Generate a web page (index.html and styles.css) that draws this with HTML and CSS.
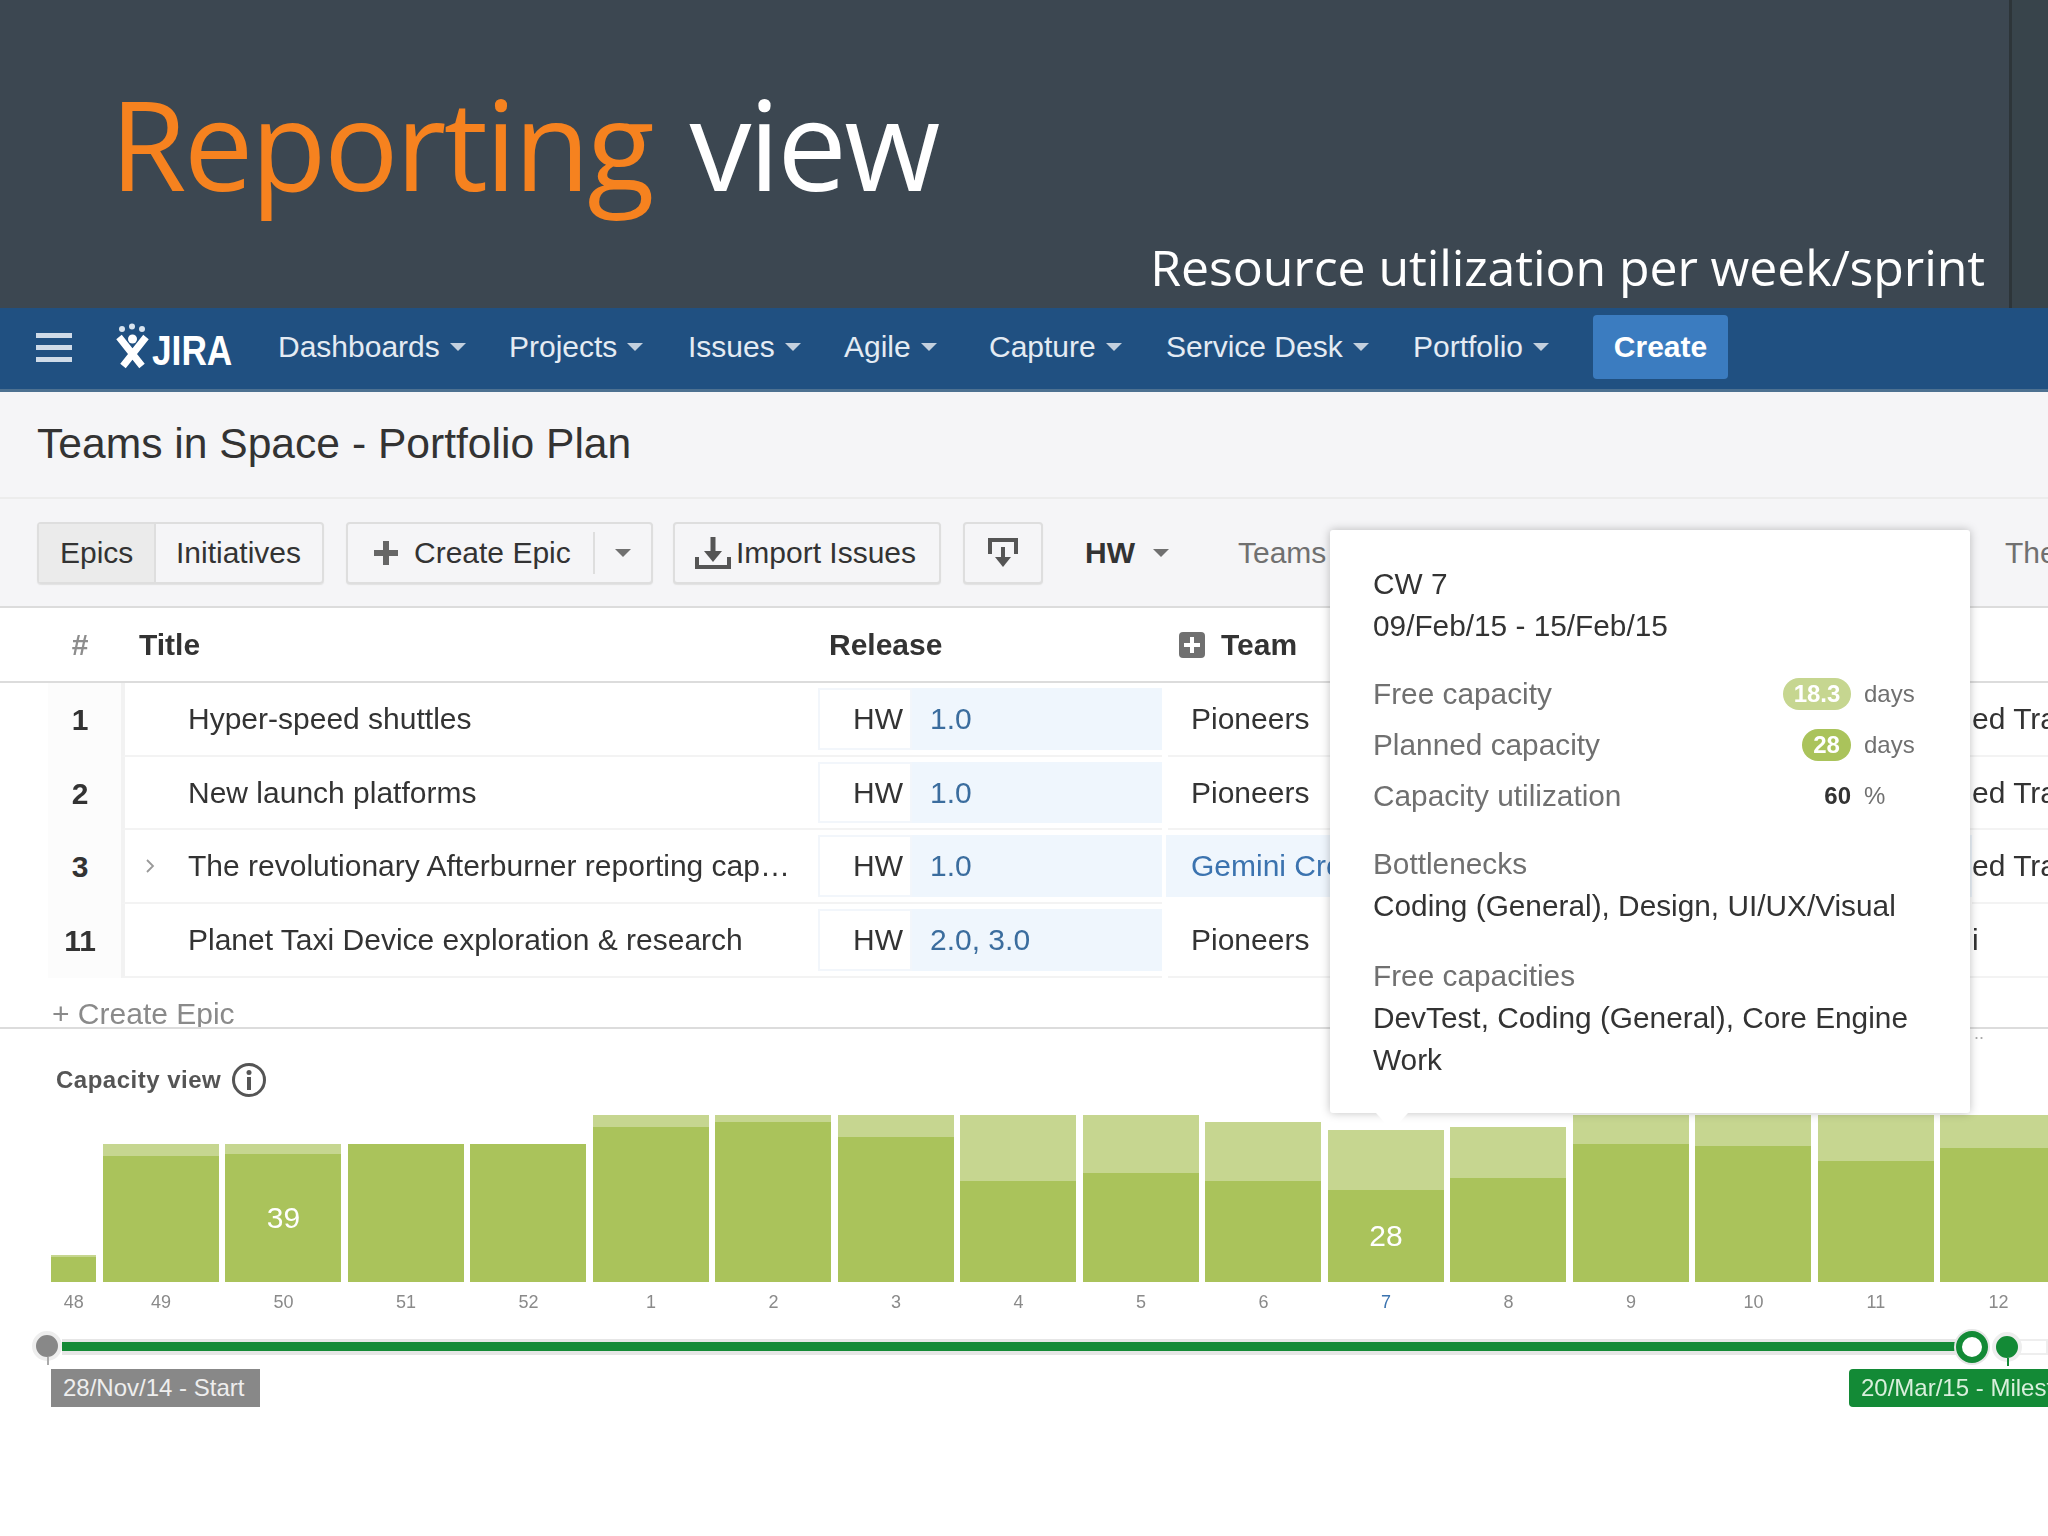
FILE: index.html
```html
<!DOCTYPE html>
<html lang="en">
<head>
<meta charset="utf-8">
<title>Reporting view</title>
<link rel="stylesheet" href="styles.css">
</head>
<body>
<div class="slide">
  <header class="hero">
    <div class="hero-main">
      <h1 class="hero-title"><span class="accent">Reporting</span> view</h1>
      <p class="hero-sub">Resource utilization per week/sprint</p>
    </div>
    <div class="hero-edge"></div>
  </header>

  <div class="app">
    <nav class="nav">
      <div class="burger"><span></span><span></span><span></span></div>
      <div class="logo">
        <svg class="logo-mark" viewBox="0 0 36 48" width="36" height="48" aria-hidden="true">
          <circle cx="7" cy="6" r="3" fill="#d9e4ef"/><circle cx="17" cy="3.500" r="3" fill="#d9e4ef"/><circle cx="27" cy="6" r="3" fill="#d9e4ef"/>
          <path d="M4 14 L27 43 M31 14 L8 43" stroke="#fff" stroke-width="7" fill="none"/>
          <circle cx="17.500" cy="16" r="4.500" fill="#fff"/>
        </svg>
        <span class="logo-text">JIRA</span>
      </div>
      <a class="nav-item nav-dash">Dashboards<i class="caret caret-nav"></i></a>
      <a class="nav-item nav-proj">Projects<i class="caret caret-nav"></i></a>
      <a class="nav-item nav-iss">Issues<i class="caret caret-nav"></i></a>
      <a class="nav-item nav-agile">Agile<i class="caret caret-nav"></i></a>
      <a class="nav-item nav-cap">Capture<i class="caret caret-nav"></i></a>
      <a class="nav-item nav-sd">Service Desk<i class="caret caret-nav"></i></a>
      <a class="nav-item nav-port">Portfolio<i class="caret caret-nav"></i></a>
      <a class="create-btn">Create</a>
    </nav>

    <div class="page-head"><h2 class="page-title">Teams in Space - Portfolio Plan</h2></div>

    <div class="toolbar">
      <div class="btn-group">
        <span class="seg seg-active">Epics</span>
        <span class="seg">Initiatives</span>
      </div>
      <div class="btn btn-create">
        <svg class="ico-plus" viewBox="0 0 24 24" width="24" height="24" aria-hidden="true"><path d="M9 0h6v9h9v6h-9v9H9v-9H0V9h9z" fill="#666"/></svg>
        <span>Create Epic</span>
        <i class="btn-sep"></i>
        <i class="caret caret-dark caret-split"></i>
      </div>
      <div class="btn btn-import">
        <svg viewBox="0 0 36 34" width="36" height="34" aria-hidden="true"><path d="M18 1v19" stroke="#555" stroke-width="5" fill="none"/><path d="M9 15h18l-9 11z" fill="#555"/><path d="M2 21v10h32V21" stroke="#555" stroke-width="4" fill="none"/></svg>
        <span>Import Issues</span>
      </div>
      <div class="btn btn-icon">
        <svg viewBox="0 0 34 32" width="34" height="32" aria-hidden="true"><path d="M4 17V3h26v14" stroke="#555" stroke-width="4" fill="none"/><path d="M2 3h30" stroke="#555" stroke-width="4"/><path d="M17 10v13" stroke="#555" stroke-width="4"/><path d="M9 20h16l-8 10z" fill="#555"/></svg>
      </div>
      <div class="hw-select">HW<i class="caret caret-dark"></i></div>
      <span class="tb-label tb-teams">Teams</span>
      <span class="tb-label tb-the">The</span>
    </div>

    <div class="row row-head">
      <div class="c-num c-hash">#</div>
      <div class="c-title-head">Title</div>
      <div class="c-release-head">Release</div>
      <div class="c-team-head">
        <svg viewBox="0 0 26 26" width="26" height="26" aria-hidden="true"><rect width="26" height="26" rx="4" fill="#707070"/><path d="M11 5h4v6h6v4h-6v6h-4v-6H5v-4h6z" fill="#fff"/></svg>
        <span>Team</span>
      </div>
    </div>

    <div class="row">
      <div class="c-num">1</div>
      <div class="c-title"><span class="chev"></span><span class="title-text">Hyper-speed shuttles</span></div>
      <div class="c-release"><span class="rel-key">HW</span><span class="rel-val">1.0</span></div>
      <div class="c-team">Pioneers</div>
      <div class="c-tail">ed Tra</div>
    </div>
    <div class="row">
      <div class="c-num">2</div>
      <div class="c-title"><span class="chev"></span><span class="title-text">New launch platforms</span></div>
      <div class="c-release"><span class="rel-key">HW</span><span class="rel-val">1.0</span></div>
      <div class="c-team">Pioneers</div>
      <div class="c-tail">ed Tra</div>
    </div>
    <div class="row">
      <div class="c-num">3</div>
      <div class="c-title"><span class="chev"><svg viewBox="0 0 10 14" width="10" height="14" aria-hidden="true"><path d="M2 1l6 6-6 6" stroke="#999" stroke-width="1.800" fill="none"/></svg></span><span class="title-text">The revolutionary Afterburner reporting cap…</span></div>
      <div class="c-release"><span class="rel-key">HW</span><span class="rel-val">1.0</span></div>
      <div class="c-team c-team-link">Gemini Crew</div>
      <div class="c-tail">ed Tra</div>
    </div>
    <div class="row">
      <div class="c-num">11</div>
      <div class="c-title"><span class="chev"></span><span class="title-text">Planet Taxi Device exploration &amp; research</span></div>
      <div class="c-release"><span class="rel-key">HW</span><span class="rel-val">2.0, 3.0</span></div>
      <div class="c-team">Pioneers</div>
      <div class="c-tail">i</div>
    </div>

    <div class="create-row">+ Create Epic</div>

    <section class="capacity">
      <span class="more-dots">..</span>
      <div class="cap-head">
        <span class="cap-title">Capacity view</span>
        <svg viewBox="0 0 36 36" width="36" height="36" aria-hidden="true"><circle cx="18" cy="18" r="15.500" fill="none" stroke="#555" stroke-width="3"/><circle cx="18" cy="10.500" r="2.500" fill="#555"/><rect x="16" y="15" width="4" height="13" fill="#555"/></svg>
      </div>
      <div class="chart">
        <div class="week week-first"><div class="bar"><div class="free" style="height:2px"></div><div class="used" style="height:25px"></div></div><span class="wk">48</span></div>
        <div class="week"><div class="bar"><div class="free" style="height:12px"></div><div class="used" style="height:126px"></div></div><span class="wk">49</span></div>
        <div class="week"><div class="bar"><div class="free" style="height:10px"></div><div class="used" style="height:128px">39</div></div><span class="wk">50</span></div>
        <div class="week"><div class="bar"><div class="used" style="height:138px"></div></div><span class="wk">51</span></div>
        <div class="week"><div class="bar"><div class="used" style="height:138px"></div></div><span class="wk">52</span></div>
        <div class="week"><div class="bar"><div class="free" style="height:12px"></div><div class="used" style="height:155px"></div></div><span class="wk">1</span></div>
        <div class="week"><div class="bar"><div class="free" style="height:7px"></div><div class="used" style="height:160px"></div></div><span class="wk">2</span></div>
        <div class="week"><div class="bar"><div class="free" style="height:22px"></div><div class="used" style="height:145px"></div></div><span class="wk">3</span></div>
        <div class="week"><div class="bar"><div class="free" style="height:66px"></div><div class="used" style="height:101px"></div></div><span class="wk">4</span></div>
        <div class="week"><div class="bar"><div class="free" style="height:58px"></div><div class="used" style="height:109px"></div></div><span class="wk">5</span></div>
        <div class="week"><div class="bar"><div class="free" style="height:59px"></div><div class="used" style="height:101px"></div></div><span class="wk">6</span></div>
        <div class="week"><div class="bar"><div class="free" style="height:60px"></div><div class="used" style="height:92px">28</div></div><span class="wk wk-current">7</span></div>
        <div class="week"><div class="bar"><div class="free" style="height:51px"></div><div class="used" style="height:104px"></div></div><span class="wk">8</span></div>
        <div class="week"><div class="bar"><div class="free" style="height:29px"></div><div class="used" style="height:138px"></div></div><span class="wk">9</span></div>
        <div class="week"><div class="bar"><div class="free" style="height:31px"></div><div class="used" style="height:136px"></div></div><span class="wk">10</span></div>
        <div class="week"><div class="bar"><div class="free" style="height:46px"></div><div class="used" style="height:121px"></div></div><span class="wk">11</span></div>
        <div class="week"><div class="bar"><div class="free" style="height:33px"></div><div class="used" style="height:134px"></div></div><span class="wk">12</span></div>
      </div>
      <div class="slider">
        <div class="track-rest"></div>
        <div class="track"><div class="track-fill"></div></div>
        <i class="knob knob-start"></i>
        <i class="knob knob-now"></i>
        <i class="knob knob-end"></i>
      </div>
      <div class="tags">
        <span class="tag tag-start">28/Nov/14 - Start</span>
        <span class="tag tag-end">20/Mar/15 - Milestone</span>
      </div>
    </section>
  </div>

  <aside class="popup">
    <div class="pop-text pop-dark">CW 7</div>
    <div class="pop-text pop-dark">09/Feb/15 - 15/Feb/15</div>
    <div class="stats">
      <div class="stat"><span class="stat-label">Free capacity</span><span class="pill pill-free">18.3</span><span class="unit">days</span></div>
      <div class="stat"><span class="stat-label">Planned capacity</span><span class="pill pill-plan">28</span><span class="unit">days</span></div>
      <div class="stat"><span class="stat-label">Capacity utilization</span><span class="pct">60</span><span class="unit">%</span></div>
    </div>
    <div class="pop-text pop-grey pop-gap1">Bottlenecks</div>
    <div class="pop-text pop-dark">Coding (General), Design, UI/UX/Visual</div>
    <div class="pop-text pop-grey pop-gap2">Free capacities</div>
    <div class="pop-text pop-dark">DevTest, Coding (General), Core Engine Work</div>
    <i class="pop-arrow"></i>
  </aside>
</div>
</body>
</html>
```

FILE: styles.css
```css
* { box-sizing: border-box; }
html, body { margin: 0; padding: 0; background: #fff; }
body { font-family: "Liberation Sans", Arial, sans-serif; color: #333; }

.slide { position: relative; width: 2048px; height: 1536px; overflow: hidden; background: #fff; }

/* Slide header */
.hero { display: flex; height: 308px; background: #3c4751; color: #fff; font-family: "Open Sans", sans-serif; }
.hero-main { flex: 1; display: flex; flex-direction: column; padding: 63px 24px 0 110px; }
.hero-title { margin: 0; font-size: 124px; line-height: 160px; font-weight: 400; letter-spacing: -2.700px; word-spacing: 8px; }
.accent { color: #f6821f; }
.hero-sub { margin: 14px 0 0; text-align: right; font-size: 50px; line-height: 60px; font-weight: 500; letter-spacing: -0.100px; white-space: nowrap; }
.hero-edge { width: 39px; background: #38444b; border-left: 3px solid #2d3539; }

/* Screenshot area */
.app { filter: blur(0.7px); font-size: 30px; }

.nav { display: flex; align-items: center; height: 84px; background: #205081; border-bottom: 3px solid #4d7191; padding: 0 0 3px 36px; color: #e4ebf3; }
.burger { display: flex; flex-direction: column; gap: 7px; width: 36px; }
.burger span { display: block; height: 5px; background: #cfdbe8; }
.logo { display: flex; align-items: flex-end; margin-left: 43px; width: 163px; color: #fff; }
.logo-mark { display: block; }
.logo-text { font-weight: 700; font-size: 43px; line-height: 42px; margin-left: 1px; transform: scaleX(0.82); transform-origin: left center; }
.nav-item { display: flex; align-items: center; white-space: nowrap; }
.nav-dash { width: 231px; }
.nav-proj { width: 179px; }
.nav-iss { width: 156px; }
.nav-agile { width: 145px; }
.nav-cap { width: 177px; }
.nav-sd { width: 247px; }
.nav-port { width: 180px; }
.caret { display: inline-block; width: 0; height: 0; border-left: 8px solid transparent; border-right: 8px solid transparent; border-top: 8px solid #707070; }
.caret-nav { margin-left: 10px; border-top-color: #c3d0de; }
.create-btn { display: flex; align-items: center; justify-content: center; width: 135px; height: 64px; background: #3b7cc0; border-radius: 4px; color: #fff; font-weight: 700; }

.page-head { height: 107px; background: #f5f5f7; border-bottom: 2px solid #ececec; padding: 26px 0 0 37px; }
.page-title { margin: 0; font-size: 42.600px; line-height: 50px; font-weight: 400; color: #333; }

.toolbar { display: flex; align-items: center; height: 109px; padding-left: 37px; background: #f5f5f7; border-bottom: 2px solid #dcdcdc; white-space: nowrap; overflow: hidden; }
.toolbar > * { flex-shrink: 0; }
.btn-group { display: flex; height: 62px; width: 287px; border: 2px solid #dedede; border-radius: 4px; box-shadow: 0 1px 1px #e2e2e2; }
.seg { display: flex; align-items: center; padding-left: 20px; flex: 1; }
.seg-active { flex: none; width: 117px; padding-left: 21px; background: #ebebeb; border-right: 2px solid #dedede; }
.btn { display: flex; align-items: center; height: 62px; border: 2px solid #dedede; border-radius: 4px; background: #f5f5f7; box-shadow: 0 1px 1px #e2e2e2; }
.btn-create { width: 307px; margin-left: 22px; padding-left: 26px; }
.ico-plus { margin-right: 16px; }
.btn-sep { width: 2px; height: 42px; background: #dedede; margin-left: 22px; }
.caret-split { margin-left: 20px; }
.btn-import { width: 268px; margin-left: 20px; padding-left: 20px; }
.btn-import svg { margin-right: 5px; }
.btn-icon { width: 80px; margin-left: 22px; justify-content: center; }
.hw-select { display: flex; align-items: center; margin-left: 42px; width: 153px; font-weight: 700; }
.hw-select .caret { margin-left: 18px; }
.tb-label { color: #707070; }
.tb-teams { width: 767px; }

.row { display: grid; grid-template-columns: 73px 697px 344px 6px 804px 76px; height: 73.700px; padding-left: 48px; align-items: stretch; white-space: nowrap; }
.row > .c-team { grid-column: 5; }
.row > .c-tail { grid-column: 6; }
.row-head { display: flex; height: 75px; padding-left: 48px; align-items: center; border-bottom: 2px solid #dcdcdc; font-weight: 700; }
.c-num { display: flex; align-items: center; justify-content: center; width: 73px; padding-right: 9px; background: #fcfcfc; font-weight: 700; }
.c-hash { color: #8d8d8d; font-weight: 700; background: none; }
.c-title-head { width: 690px; margin-left: 18px; }
.c-release-head { width: 350px; }
.c-team-head { display: flex; align-items: center; gap: 16px; }
.c-title { display: flex; align-items: center; border-bottom: 2px solid #f3f3f3; border-left: 4px solid #f2f2f2; }
.chev { width: 63px; padding-left: 20px; display: flex; align-items: center; }
.c-release { display: flex; align-items: stretch; padding: 5px 0; border-bottom: 2px solid #f3f3f3; }
.rel-key { width: 94px; display: flex; align-items: center; justify-content: flex-end; padding-right: 7px; border: 2px solid #f2f6fb; }
.rel-val { flex: 1; display: flex; align-items: center; padding-left: 18px; background: #eff6fd; color: #3b6d9e; }
.c-team { display: flex; align-items: center; padding-left: 23px; border-bottom: 2px solid #f3f3f3; }
.c-team-link { color: #3b73af; background: #eff6fd; margin: 5px 0 7px -2px; border-bottom: 0; padding-left: 25px; }
.c-tail { display: flex; align-items: center; overflow: hidden; border-bottom: 2px solid #f3f3f3; }

.create-row { height: 51px; padding: 18px 0 0 52px; line-height: 36px; color: #8a8a8a; border-bottom: 2px solid #dcdcdc; overflow: hidden; }

.capacity { position: relative; padding-top: 35px; }
.more-dots { position: absolute; left: 1974px; top: -6px; font-size: 18px; line-height: 20px; color: #aaa; }
.cap-head { display: flex; align-items: center; gap: 10px; height: 32px; padding-left: 56px; }
.cap-title { font-size: 24px; font-weight: 700; color: #555; letter-spacing: 0.5px; }
.chart { display: flex; gap: 6.500px; padding-left: 51px; margin-top: 19px; overflow: hidden; }
.week { flex: none; display: flex; flex-direction: column; width: 116px; }
.week-first { width: 45.400px; }
.bar { display: flex; flex-direction: column; justify-content: flex-end; height: 167px; }
.free { background: #c6d690; }
.used { display: flex; align-items: center; justify-content: center; background: #aac35b; color: #fff; font-size: 30px; }
.wk { margin-top: 7px; height: 26px; line-height: 26px; text-align: center; font-size: 18px; color: #8a8a8a; }
.wk-current { color: #3b73af; }

.slider { position: relative; height: 32px; margin-top: 16px; }
.track { position: absolute; left: 62px; width: 1910px; top: 8px; height: 16px; background: #e6e6e6; }
.track-fill { height: 9px; margin-top: 3px; background: #138a36; }
.track-rest { position: absolute; left: 2007px; right: 0; top: 8px; height: 16px; background: #fff; border: 2px solid #eee; }
.knob { position: absolute; border-radius: 50%; }
.knob::after { content: ""; position: absolute; left: 50%; top: 100%; width: 2px; height: 8px; }
.knob-start { left: 32px; top: 0; width: 30px; height: 30px; background: #888; border: 4px solid #eee; }
.knob-start::after { background: #aaa; }
.knob-now { left: 1956px; top: 0; width: 32px; height: 32px; background: #fff; border: 6px solid #138a36; box-shadow: 0 0 0 2px #e6e6e6; }
.knob-now::after { display: none; }
.knob-end { left: 1992px; top: 1px; width: 30px; height: 30px; background: #138a36; border: 4px solid #eee; }
.knob-end::after { background: #138a36; }
.tags { display: flex; justify-content: space-between; padding-left: 51px; margin-top: 6px; overflow: hidden; white-space: nowrap; }
.tag { display: flex; align-items: center; height: 38px; padding-left: 12px; font-size: 24px; color: #eee; }
.tag-start { width: 209px; background: #888; }
.tag-end { width: 199px; background: #138a36; border-radius: 4px 0 0 4px; color: #d9efdc; overflow: hidden; }

/* Popup */
.popup { position: absolute; left: 1330px; top: 530px; width: 640px; height: 583px; padding: 33px 43px 0; background: #fff; border-radius: 3px; box-shadow: 0 0 10px rgba(0,0,0,.25); font-size: 29.800px; filter: blur(0.7px); }
.pop-text { line-height: 42px; }
.pop-dark { color: #333; }
.pop-grey { color: #707070; }
.pop-gap1 { margin-top: 22px; }
.pop-gap2 { margin-top: 28px; }
.stats { margin-top: 21px; }
.stat { display: flex; align-items: center; height: 51px; color: #707070; }
.stat-label { flex: 1; }
.pill { display: flex; align-items: center; justify-content: center; height: 32px; border-radius: 16px; color: #fff; font-size: 24px; font-weight: 700; }
.pill-free { width: 68px; background: #c6d690; }
.pill-plan { width: 49px; background: #aac35b; }
.pct { font-size: 24px; font-weight: 700; color: #333; }
.unit { width: 76px; padding-left: 13px; font-size: 24px; }
.pop-arrow { position: absolute; left: 46px; bottom: -17px; width: 0; height: 0; border-left: 16px solid transparent; border-right: 16px solid transparent; border-top: 17px solid #fff; }
```
